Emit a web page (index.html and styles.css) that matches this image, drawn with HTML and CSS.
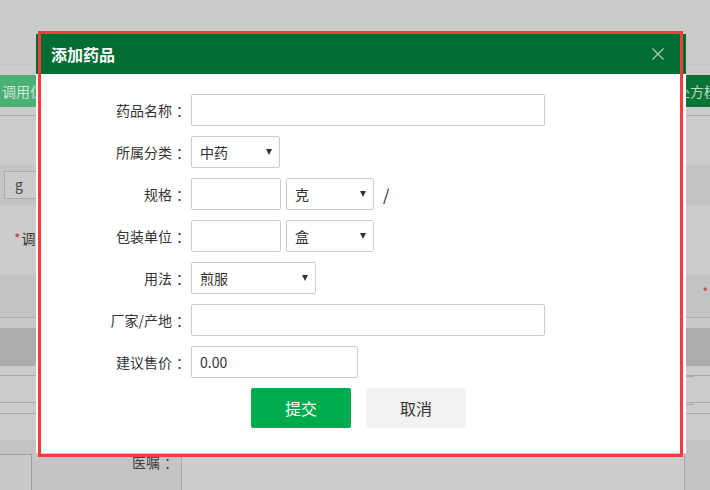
FILE: index.html
```html
<!DOCTYPE html>
<html lang="zh-CN">
<head>
<meta charset="utf-8">
<title>添加药品</title>
<link rel="stylesheet" href="styles.css">
</head>
<body>
<div class="page">
  <div class="top"></div>
  <div class="toolbar">
    <div class="btn-l">调用仁术模板</div>
    <div class="btn-r">处方模板</div>
  </div>
  <div class="rule r1"></div>
  <div class="band1"><div class="gbox">g</div></div>
  <div class="lrow"><span class="req">*</span>调用</div>
  <div class="band2"><span class="req2">*</span></div>
  <div class="rule"></div>
  <div class="gap11"></div>
  <div class="band3"></div>
  <div class="gap9"></div>
  <div class="rule"></div>
  <div class="band4"><div class="rbox"></div></div>
  <div class="rule"></div>
  <div class="gap10"></div>
  <div class="rule"></div>
  <div class="gap27"></div>
  <div class="bottom">
    <div class="cell-l"><div class="lbox"></div><span class="yz">医嘱<span class="colon">：</span></span></div>
    <div class="cell-m"></div>
    <div class="cell-r"></div>
  </div>
</div>

<div class="modal">
  <div class="modal-head">
    <span class="modal-title">添加药品</span>
    <svg class="close" width="12" height="12" viewBox="0 0 12 12"><path d="M0.5 0.5 L11.5 11.5 M11.5 0.5 L0.5 11.5" stroke="#a9c7b3" stroke-width="1.4" fill="none"/></svg>
  </div>
  <div class="form">
    <div class="frow"><label class="flabel">药品名称<span class="colon">：</span></label><div class="inp w354"></div></div>
    <div class="frow"><label class="flabel">所属分类<span class="colon">：</span></label><div class="sel w89"><span>中药</span><i class="arrow"></i></div></div>
    <div class="frow"><label class="flabel">规格<span class="colon">：</span></label><div class="inp w90"></div><div class="sel w88 ml5"><span>克</span><i class="arrow"></i></div><span class="slash">/</span></div>
    <div class="frow"><label class="flabel">包装单位<span class="colon">：</span></label><div class="inp w90"></div><div class="sel w88 ml5"><span>盒</span><i class="arrow"></i></div></div>
    <div class="frow"><label class="flabel">用法<span class="colon">：</span></label><div class="sel w125"><span>煎服</span><i class="arrow"></i></div></div>
    <div class="frow"><label class="flabel">厂家/产地<span class="colon">：</span></label><div class="inp w354"></div></div>
    <div class="frow"><label class="flabel">建议售价<span class="colon">：</span></label><div class="inp w167"><span>0.00</span></div></div>
    <div class="btns">
      <div class="btn-ok">提交</div>
      <div class="btn-cancel">取消</div>
    </div>
  </div>
</div>

<div class="annot"></div>
</body>
</html>
```

FILE: styles.css
```css
* { box-sizing: border-box; }
html, body { margin: 0; padding: 0; }
body {
  width: 710px;
  height: 490px;
  overflow: hidden;
  position: relative;
  font-family: "Noto Sans CJK SC", "Noto Sans", sans-serif;
  font-size: 14px;
  color: #333;
}
.page {
  width: 710px;
  height: 490px;
  overflow: hidden;
  background: #cccccc;
}
.top { height: 65px; background: #cbcbcb; border-bottom: 1px solid #c5c5c5; }
.toolbar {
  margin-top: 10px;
  height: 32px;
  display: flex;
  justify-content: space-between;
  overflow: hidden;
}
.btn-l {
  margin-left: -10px;
  padding: 0 12px;
  background: #4caf73;
  color: #cfeadb;
  line-height: 32px;
  white-space: nowrap;
}
.btn-r {
  margin-right: -46px;
  padding: 0 10px;
  background: #0a7434;
  color: #bcd9c6;
  line-height: 32px;
  white-space: nowrap;
  width: 90px;
}
.rule { height: 1px; background: #ababab; }
.r1 { margin-top: 8px; }
.band1 {
  margin-top: 49px;
  height: 40px;
  background: #c4c4c4;
  display: flex;
  align-items: center;
  padding-left: 4px;
}
.gbox {
  width: 60px;
  height: 28px;
  border: 1px solid #acacac;
  background: #cbcbcb;
  padding-left: 10px;
  line-height: 24px;
  color: #444;
}
.lrow {
  height: 70px;
  padding: 23px 0 0 14px;
  color: #333;
}
.req { color: #c43a3a; margin-right: 1px; }
.band2 {
  height: 42px;
  background: #c3c3c3;
  position: relative;
}
.req2 { position: absolute; right: 2px; top: 8px; color: #c33; font-size: 12px; }
.gap11 { height: 10px; background: #c8c8c8; }
.band3 { height: 38px; background: #acacac; }
.gap9 { height: 9px; }
.band4 { height: 26px; display: flex; justify-content: flex-end; }
.rbox {
  width: 24px;
  margin-right: 16px;
  height: 29px;
  border: 1px solid #a8a8a8;
  border-right: none;
}
.gap10 { height: 10px; }
.gap27 { height: 26px; }
.bottom { display: flex; height: 60px; }
.cell-l {
  width: 182px;
  background: #c4c4c6;
  position: relative;
  display: flex;
  justify-content: flex-end;
  padding: 12px 7px 0 0;
  border-right: 1px solid #a9a9a9;
}
.lbox {
  position: absolute;
  left: 0;
  top: 14px;
  width: 32px;
  height: 50px;
  border: 1px solid #a0a0a0;
  border-left: none;
  background: #c8c8c8;
}
.yz { color: #444; }
.colon { display: inline-block; padding-left: 4px; margin-right: -4px; }
.cell-m { width: 503px; background: #cccccc; border-right: 1px solid #a9a9a9; }
.cell-r { flex: 1; background: #c4c4c6; }

/* modal */
.modal {
  position: absolute;
  left: 36px;
  top: 34px;
  width: 650px;
  height: 420px;
  background: #fff;
  border-bottom: 1px solid #c9c9c9;
}
.modal-head {
  height: 40px;
  background: #006e33;
  display: flex;
  align-items: center;
  justify-content: space-between;
  padding: 0 22px 0 15px;
}
.modal-title { color: #fff; font-size: 16px; font-weight: bold; }
.close { display: block; }
.form { padding-top: 20px; }
.frow {
  display: flex;
  align-items: center;
  height: 32px;
  margin-bottom: 10px;
}
.flabel {
  width: 150px;
  text-align: right;
  margin-right: 5px;
  color: #333;
}
.inp, .sel {
  height: 32px;
  border: 1px solid #cccccc;
  border-radius: 2px;
  background: #fff;
  display: flex;
  align-items: center;
  padding-left: 8px;
  color: #333;
}
.sel { justify-content: space-between; padding-right: 7px; }
.arrow {
  display: block;
  width: 0;
  height: 0;
  border-left: 3px solid transparent;
  border-right: 3px solid transparent;
  border-top: 6px solid #333;
}
.w354 { width: 354px; }
.w89 { width: 89px; }
.w90 { width: 90px; }
.w88 { width: 88px; }
.w125 { width: 125px; }
.w167 { width: 167px; }
.ml5 { margin-left: 5px; }
.slash { margin-left: 9px; font-size: 16px; color: #222; }
.btns {
  display: flex;
  gap: 15px;
  padding-left: 215px;
}
.btn-ok, .btn-cancel {
  width: 100px;
  height: 40px;
  border-radius: 2px;
  display: flex;
  align-items: center;
  justify-content: center;
  font-size: 16px;
}
.btn-ok { background: #00ab4e; color: #fff; }
.btn-cancel { background: #f2f2f2; color: #333; }

.annot {
  position: absolute;
  left: 38px;
  top: 31px;
  width: 645px;
  height: 426px;
  border: 3px solid #f53b3b;
}
```
